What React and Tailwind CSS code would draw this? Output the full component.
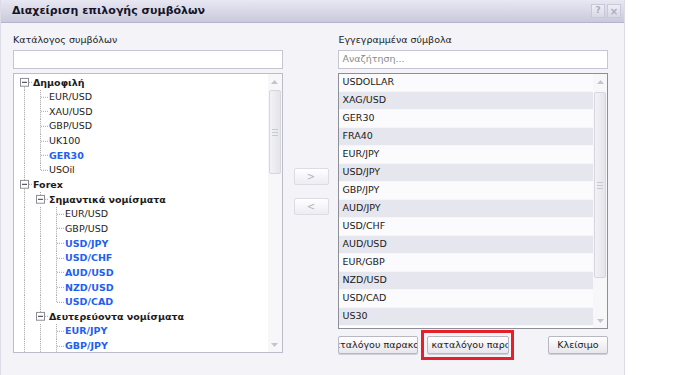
import React from "react";

const FONT = { fontFamily: '"DejaVu Sans", Verdana, sans-serif' };

// tree rows: lvl, text, node (has box), bold, blue, guides (vertical lines in ancestor columns), last, first
const treeRows = [
  { lvl: 0, text: "Δημοφιλή", node: true, bold: true, guides: [], first: true },
  { lvl: 1, text: "EUR/USD", guides: [true] },
  { lvl: 1, text: "XAU/USD", guides: [true] },
  { lvl: 1, text: "GBP/USD", guides: [true] },
  { lvl: 1, text: "UK100", guides: [true] },
  { lvl: 1, text: "GER30", blue: true, bold: true, guides: [true] },
  { lvl: 1, text: "USOil", guides: [true], last: true },
  { lvl: 0, text: "Forex", node: true, bold: true, guides: [] },
  { lvl: 1, text: "Σημαντικά νομίσματα", node: true, bold: true, guides: [true] },
  { lvl: 2, text: "EUR/USD", guides: [true, true] },
  { lvl: 2, text: "GBP/USD", guides: [true, true] },
  { lvl: 2, text: "USD/JPY", blue: true, bold: true, guides: [true, true] },
  { lvl: 2, text: "USD/CHF", blue: true, bold: true, guides: [true, true] },
  { lvl: 2, text: "AUD/USD", blue: true, bold: true, guides: [true, true] },
  { lvl: 2, text: "NZD/USD", blue: true, bold: true, guides: [true, true] },
  { lvl: 2, text: "USD/CAD", blue: true, bold: true, guides: [true, true], last: true },
  { lvl: 1, text: "Δευτερεύοντα νομίσματα", node: true, bold: true, guides: [true] },
  { lvl: 2, text: "EUR/JPY", blue: true, bold: true, guides: [true, true] },
  { lvl: 2, text: "GBP/JPY", blue: true, bold: true, guides: [true, true] },
];

const selected = [
  "USDOLLAR", "XAG/USD", "GER30", "FRA40", "EUR/JPY", "USD/JPY", "GBP/JPY",
  "AUD/JPY", "USD/CHF", "AUD/USD", "EUR/GBP", "NZD/USD", "USD/CAD", "US30",
];

const LINE = "#a4a4ac";

const GuideCell = ({ on }) => (
  <svg className="h-full w-4 shrink-0" viewBox="0 0 16 15" preserveAspectRatio="none">
    {on && <line x1="8.5" y1="0" x2="8.5" y2="15" stroke={LINE} strokeDasharray="1 1" />}
  </svg>
);

const OwnCell = ({ row }) => {
  if (row.node) {
    return (
      <svg className="h-full w-4 shrink-0" viewBox="0 0 16 15" preserveAspectRatio="none">
        {!row.first && <line x1="8.5" y1="0" x2="8.5" y2="3" stroke={LINE} strokeDasharray="1 1" />}
        {row.lvl === 0 && <line x1="8.5" y1="12" x2="8.5" y2="15" stroke={LINE} strokeDasharray="1 1" />}
        <rect x="4.5" y="3.5" width="8" height="8" fill="#fff" stroke="#8c8c96" />
        <line x1="6" y1="7.5" x2="11" y2="7.5" stroke="#333" />
        <line x1="13" y1="7.5" x2="16" y2="7.5" stroke={LINE} strokeDasharray="1 1" />
      </svg>
    );
  }
  return (
    <svg className="h-full w-4 shrink-0" viewBox="0 0 16 15" preserveAspectRatio="none">
      <line x1="8.5" y1="0" x2="8.5" y2={row.last ? 7.5 : 15} stroke={LINE} strokeDasharray="1 1" />
      <line x1="9" y1="7.5" x2="16" y2="7.5" stroke={LINE} strokeDasharray="1 1" />
    </svg>
  );
};

const Scrollbar = ({ thumbTop, thumbH, grip }) => (
  <div className="flex w-[14px] shrink-0 flex-col items-center bg-[#f7f7fa]">
    <div className="flex h-[16px] w-full items-center justify-center">
      <svg width="7" height="4" viewBox="0 0 7 4"><path d="M0 4 L3.5 0 L7 4 Z" fill="#c4c4cc" /></svg>
    </div>
    <div
      className="flex w-[12px] flex-col items-center justify-center gap-[2px] rounded-[2px] border border-[#d6d6de] bg-gradient-to-r from-[#f2f2f6] to-[#e4e4ea]"
      style={{ marginTop: thumbTop, height: thumbH }}
    >
      {grip && (
        <>
          <div className="h-px w-[6px] bg-[#c8c8d0]" />
          <div className="h-px w-[6px] bg-[#c8c8d0]" />
          <div className="h-px w-[6px] bg-[#c8c8d0]" />
        </>
      )}
    </div>
    <div className="mt-auto flex h-[14px] w-full items-center justify-center">
      <svg width="7" height="4" viewBox="0 0 7 4"><path d="M0 0 L3.5 4 L7 0 Z" fill="#c4c4cc" /></svg>
    </div>
  </div>
);

const ArrowButton = ({ label }) => (
  <div className="flex h-[17px] w-[35px] items-center justify-center rounded-[2px] border border-[#dcdce4] bg-gradient-to-b from-[#ffffff] to-[#ededf2] text-[10px] text-[#b4b4c0]">
    {label}
  </div>
);

const Button = ({ children, className = "" }) => (
  <div
    className={`flex h-[18px] items-center overflow-hidden whitespace-nowrap rounded-[2px] border border-[#b8b8c4] bg-gradient-to-b from-[#ffffff] to-[#e6e6ec] text-[9.5px] text-[#1a1a1a] shadow-[0_1px_0_#d0d0d8] ${className}`}
  >
    {children}
  </div>
);

export default function App() {
  return (
    <div className="flex h-[375px] w-[700px] bg-white" style={FONT}>
      <div className="flex h-full w-[625px] flex-col border-x border-[#dcdce6] bg-[#f3f3f8]">
        {/* title bar */}
        <div className="flex h-[23px] shrink-0 items-center border-b border-[#b4b4ca] bg-gradient-to-b from-[#e8e8f3] to-[#c9c9dc] pl-[11px] pr-[3px]">
          <span className="text-[11px] font-bold text-[#15152a]">Διαχείριση επιλογής συμβόλων</span>
          <div className="ml-auto flex gap-[2px]">
            <div className="flex h-[14px] w-[14px] items-center justify-center border border-[#c8c8d8] bg-gradient-to-b from-[#eeeef6] to-[#d8d8e6] text-[9px] font-bold text-[#ababbe]">?</div>
            <div className="flex h-[14px] w-[14px] items-center justify-center border border-[#c8c8d8] bg-gradient-to-b from-[#eeeef6] to-[#d8d8e6] text-[10px] font-bold text-[#ababbe]">×</div>
          </div>
        </div>

        {/* body */}
        <div className="flex flex-1 pl-[12px] pr-[16px] pt-[10px]">
          {/* left column */}
          <div className="flex w-[270px] flex-col">
            <div className="h-[13px] text-[9.5px] leading-[13px] text-[#222]">Κατάλογος συμβόλων</div>
            <div className="mt-[4px] h-[19px] border border-[#c6c6d2] bg-white" />
            <div className="mt-[4px] flex h-[280px] border border-[#bcbcca] bg-white">
              <div className="flex-1 overflow-hidden pl-[2px] pt-px">
                {treeRows.map((row, i) => (
                  <div key={i} className="flex h-[14.65px] items-center">
                    {row.guides.map((g, j) => (
                      <GuideCell key={j} on={g} />
                    ))}
                    <OwnCell row={row} />
                    <span
                      className={`pl-px text-[9.5px] leading-none ${row.bold ? "font-bold" : ""} ${
                        row.blue ? "text-[#1e5ef2]" : "text-[#1c1c1c]"
                      }`}
                    >
                      {row.text}
                    </span>
                  </div>
                ))}
              </div>
              <Scrollbar thumbTop={0} thumbH={84} grip />
            </div>
          </div>

          {/* middle buttons */}
          <div className="flex w-[56px] flex-col items-center pt-[135px] pl-[1px]">
            <ArrowButton label=">" />
            <div className="mt-[13px]">
              <ArrowButton label="<" />
            </div>
          </div>

          {/* right column */}
          <div className="flex w-[270px] flex-col">
            <div className="h-[13px] text-[9.5px] leading-[13px] text-[#222]">Εγγεγραμμένα σύμβολα</div>
            <div className="mt-[4px] flex h-[19px] items-center border border-[#c6c6d2] bg-white pl-[3px] text-[9.5px] text-[#8a8a8a]">
              Αναζήτηση...
            </div>
            <div className="mt-[4px] flex h-[256px] border border-[#8e8e98] bg-white">
              <div className="flex-1">
                {selected.map((s, i) => (
                  <div
                    key={s}
                    className={`flex h-[18px] items-center border-b border-[#f6f6fa] pl-[3px] text-[9.5px] text-[#202020] ${
                      i % 2 ? "bg-[#e6e6ee]" : "bg-[#fbfbfd]"
                    }`}
                  >
                    {s}
                  </div>
                ))}
              </div>
              <Scrollbar thumbTop={2} thumbH={186} grip />
            </div>

            {/* bottom buttons */}
            <div className="mt-[7px] flex h-[18px] items-center">
              <Button className="w-[80px] justify-center">
                <span className="-ml-[4px]">καταλόγου παρακολ</span>
              </Button>
              <div className="-my-[6px] ml-[3px] border-[3px] border-[#e5202a] py-[3px] pl-[3px] pr-[2px]">
                <Button className="w-[82px] pl-[3px]">καταλόγου παρακο</Button>
              </div>
              <Button className="ml-auto w-[60px] justify-center">Κλείσιμο</Button>
            </div>
          </div>
        </div>
      </div>
    </div>
  );
}
